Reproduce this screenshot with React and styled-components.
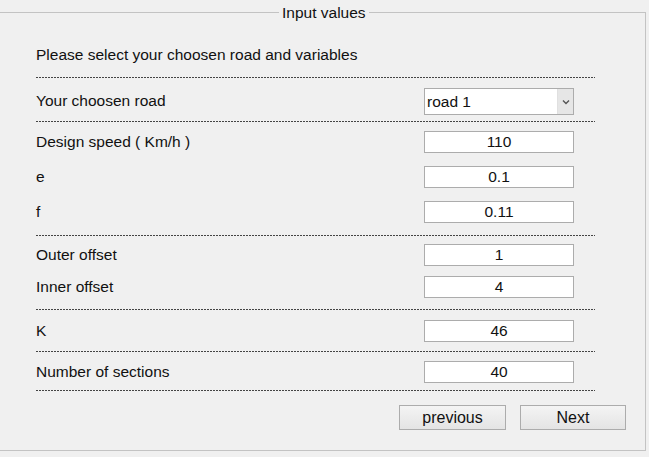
import React from 'react';
import styled, { createGlobalStyle } from 'styled-components';

const GlobalStyle = createGlobalStyle`
  html, body {
    margin: 0;
    background: #f0f0f0;
  }
  body {
    font-family: 'Liberation Sans', Arial, sans-serif;
    color: #111;
    overflow: hidden;
  }
`;

const Panel = styled.fieldset`
  margin: 4px 3px 0 -2px;
  padding: 0 19px 20px 37px;
  border: 1px solid #c3c3c3;
  border-left-color: transparent;
  min-width: 0;
`;

const Legend = styled.legend`
  margin-left: 243px;
  padding: 0 3px;
  font-size: 15.5px;
  line-height: 17px;
`;

const Intro = styled.div`
  padding-top: 25px;
  font-size: 15.5px;
  line-height: 17px;
`;

const Divider = styled.div`
  width: 559px;
  height: 1px;
  margin-top: ${p => p.$mt || 0}px;
  background: repeating-linear-gradient(to right, #444 0 2px, transparent 2px 3px);
`;

const Group = styled.div`
  width: 559px;
  display: flex;
  flex-direction: column;
  gap: ${p => p.$gap || 0}px;
  padding: ${p => p.$pt}px 0 ${p => p.$pb}px;
`;

const Row = styled.div`
  display: grid;
  grid-template-columns: 388px 150px;
  align-items: center;
  height: ${p => p.$h || 22}px;
`;

const Label = styled.span`
  font-size: 15.5px;
  line-height: 17px;
  margin-top: -2px;
`;

const Field = styled.div`
  box-sizing: border-box;
  height: 22px;
  border: 1px solid #acacac;
  background: #fff;
  font-size: 15.5px;
  line-height: 20px;
  text-align: center;
`;

const Select = styled.div`
  box-sizing: border-box;
  height: 27px;
  display: flex;
  border: 1px solid #acacac;
  background: #fff;
  font-size: 15.5px;
`;

const SelectValue = styled.span`
  flex: 1;
  padding-left: 2px;
  line-height: 25px;
`;

const SelectArrow = styled.span`
  width: 15px;
  display: flex;
  align-items: center;
  justify-content: center;
  background: #e6e6e6;
  border-left: 1px solid #e0e0e0;
`;

const ButtonBar = styled.div`
  display: flex;
  justify-content: flex-end;
  gap: 14px;
  padding-top: 14px;
`;

const Button = styled.button`
  box-sizing: border-box;
  width: ${p => p.$w}px;
  height: 25px;
  padding: 0;
  border: 1px solid #acacac;
  background: linear-gradient(#f4f4f4, #e4e4e4);
  font-family: inherit;
  font-size: 16px;
  color: #111;
`;

function InputRow({ label, value }) {
  return (
    <Row>
      <Label>{label}</Label>
      <Field>{value}</Field>
    </Row>
  );
}

export default function App() {
  return (
    <>
      <GlobalStyle />
      <Panel>
        <Legend>Input values</Legend>
        <Intro>Please select your choosen road and variables</Intro>
        <Divider $mt={14} />
        <Group $pt={10} $pb={6}>
          <Row $h={27}>
            <Label>Your choosen road</Label>
            <Select>
              <SelectValue>road 1</SelectValue>
              <SelectArrow>
                <svg width="8" height="6" viewBox="0 0 8 6">
                  <path d="M1 1.5 L4 4.5 L7 1.5" fill="none" stroke="#555" strokeWidth="1.4" />
                </svg>
              </SelectArrow>
            </Select>
          </Row>
        </Group>
        <Divider />
        <Group $pt={9} $pb={12} $gap={13}>
          <InputRow label="Design speed ( Km/h )" value="110" />
          <InputRow label="e" value="0.1" />
          <InputRow label="f" value="0.11" />
        </Group>
        <Divider />
        <Group $pt={8} $pb={11} $gap={10}>
          <InputRow label="Outer offset" value="1" />
          <InputRow label="Inner offset" value="4" />
        </Group>
        <Divider />
        <Group $pt={10} $pb={9}>
          <InputRow label="K" value="46" />
        </Group>
        <Divider />
        <Group $pt={9} $pb={7}>
          <InputRow label="Number of sections" value="40" />
        </Group>
        <Divider />
        <ButtonBar>
          <Button $w={107}>previous</Button>
          <Button $w={106}>Next</Button>
        </ButtonBar>
      </Panel>
    </>
  );
}
